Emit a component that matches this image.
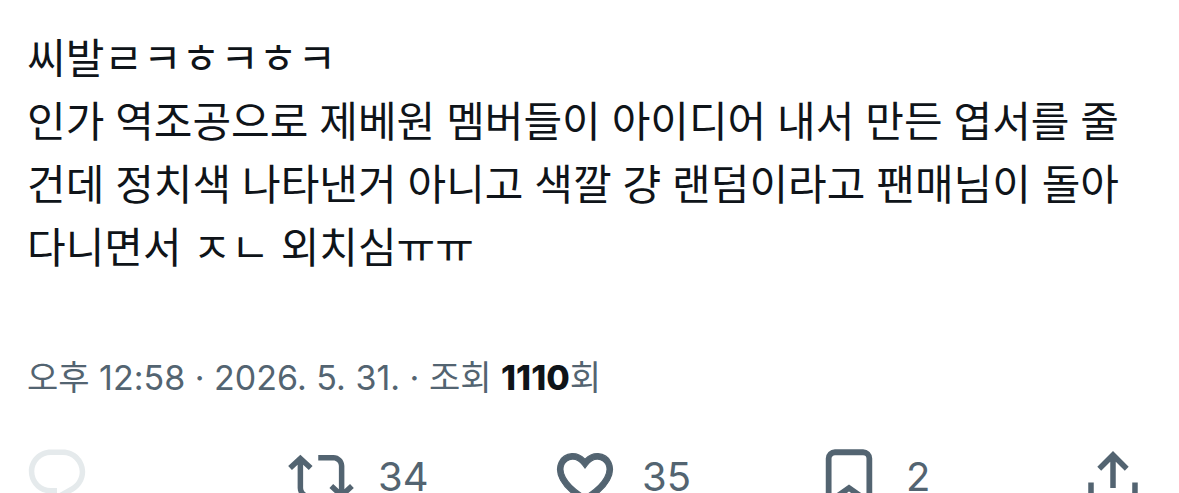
<article class="post">
  <p class="text">씨발ㄹㅋㅎㅋㅎㅋ<br />인가 역조공으로 제베원 멤버들이 아이디어 내서 만든 엽서를 줄<br />건데 정치색 나타낸거 아니고 색깔 걍 랜덤이라고 팬매님이 돌아<br />다니면서 ㅈㄴ 외치심ㅠㅠ</p>
  <p class="meta">오후 12:58 · 2026. 5. 31. · 조회 <b>1110</b>회</p>
  <div class="actions">
    <button class="reply" aria-label="답글" disabled>
      <svg viewBox="0 0 24 24"><path fill="currentColor" d="M1.751 10c0-4.42 3.584-8 8.005-8h4.366c4.49 0 8.129 3.64 8.129 8.13 0 2.96-1.607 5.68-4.196 7.11l-8.054 4.46v-3.69h-.067c-4.49.1-8.183-3.51-8.183-8.01zm8.005-6c-3.317 0-6.005 2.69-6.005 6 0 3.37 2.77 6.08 6.138 6.01l.351-.01h1.761v2.3l5.087-2.81c1.951-1.08 3.163-3.13 3.163-5.36 0-3.39-2.744-6.13-6.129-6.13H9.756z"/></svg>
    </button>
    <button aria-label="재게시 34">
      <svg viewBox="0 0 24 24"><path fill="currentColor" d="M4.5 3.88l4.432 4.14-1.364 1.46L5.5 7.55V16c0 1.1.896 2 2 2H13v2H7.5c-2.209 0-4-1.79-4-4V7.55L1.432 9.48.068 8.02 4.5 3.88zM16.5 6H11V4h5.5c2.209 0 4 1.79 4 4v8.45l2.068-1.93 1.364 1.46-4.432 4.14-4.432-4.14 1.364-1.46 2.068 1.93V8c0-1.1-.896-2-2-2z"/></svg><span>34</span>
    </button>
    <button aria-label="마음에 들어요 35">
      <svg viewBox="0 0 24 24"><path fill="currentColor" stroke="currentColor" stroke-width=".4" d="M16.697 5.5c-1.222-.06-2.679.51-3.89 2.16l-.805 1.09-.806-1.09C9.984 6.01 8.526 5.44 7.304 5.5c-1.243.07-2.349.78-2.91 1.91-.552 1.12-.633 2.78.479 4.82 1.074 1.97 3.257 4.27 7.129 6.61 3.87-2.34 6.052-4.64 7.126-6.61 1.111-2.04 1.03-3.7.477-4.82-.561-1.13-1.666-1.84-2.908-1.91zm4.187 7.69c-1.351 2.48-4.001 5.12-8.379 7.67l-.503.3-.504-.3c-4.379-2.55-7.029-5.19-8.382-7.67-1.36-2.5-1.41-4.86-.514-6.67.887-1.79 2.647-2.91 4.601-3.01 1.651-.09 3.368.56 4.798 2.01 1.429-1.45 3.146-2.1 4.796-2.01 1.954.1 3.714 1.22 4.601 3.01.896 1.81.846 4.17-.514 6.67z"/></svg><span>35</span>
    </button>
    <button aria-label="북마크 2">
      <svg viewBox="0 0 24 24"><path fill="none" stroke="currentColor" stroke-width="2.1" d="M4.6 21.2V5.3A2.3 2.3 0 0 1 6.9 3h10.2a2.3 2.3 0 0 1 2.3 2.3v15.9L12 16z"/></svg><span>2</span>
    </button>
    <button aria-label="공유">
      <svg viewBox="0 0 24 24"><path fill="currentColor" d="M12 2.59l5.7 5.7-1.41 1.42L13 6.41V16h-2V6.41l-3.3 3.3-1.41-1.42L12 2.59zM21 14l-.02 4.51c0 1.38-1.12 2.49-2.5 2.49H5.5C4.11 21 3 19.88 3 18.5V14h2v4.5c0 .28.22.5.5.5h12.98c.28 0 .5-.22.5-.5L19 14h2z"/></svg>
    </button>
  </div>
</article>

<style>
  :global(body) { background: #fff; height: 100vh; overflow: hidden; }
  .post { padding: 26px 33px 0 24px; font-family: Inter, "Noto Sans CJK KR", sans-serif; color: #0f1419; }
  p { margin: 0; padding-left: 3px; white-space: nowrap; }
  .text { font-family: "Noto Sans", "Noto Sans CJK KR", sans-serif; font-size: 42px; line-height: 63px; }
  .meta { margin-top: 74px; font-size: 34px; line-height: 52px; color: #536471; }
  b { color: #0f1419; font-weight: 800; }
  .actions { display: flex; margin-top: 40px; }
  button { display: flex; flex: 1; align-items: center; gap: 24px; padding: 0; border: 0; background: none; color: #536471; font: 40px/60px Inter, sans-serif; }
  button:last-child { flex: none; }
  svg { width: 66px; height: 66px; flex: none; }
  .reply { color: #e5eaec; }
</style>
